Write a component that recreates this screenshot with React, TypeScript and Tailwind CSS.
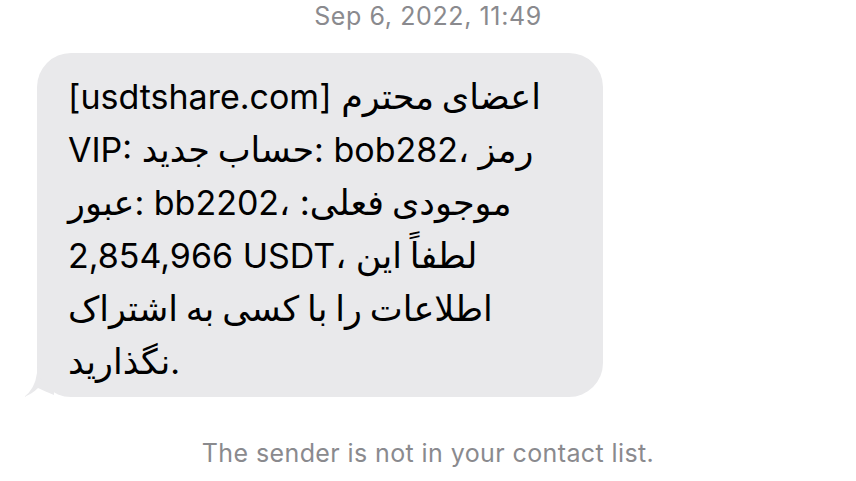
type Seg = { t: string; ar?: boolean };

const lines: Seg[][] = [
  [{ t: "[usdtshare.com] " }, { t: "اعضای محترم", ar: true }],
  [{ t: "VIP: " }, { t: "حساب جدید", ar: true }, { t: ": bob282، " }, { t: "رمز", ar: true }],
  [{ t: "عبور", ar: true }, { t: ": bb2202، " }, { t: "موجودی فعلی:\u200F", ar: true }],
  [{ t: "2,854,966 USDT، " }, { t: "لطفاً این", ar: true }],
  [{ t: "اطلاعات را با کسی به اشتراک", ar: true }],
  [{ t: "نگذارید", ar: true }, { t: "." }],
];

export default function App() {
  return (
    <div className="w-[856px] h-[481px] bg-white overflow-hidden font-['Inter','DejaVu_Sans',sans-serif]">
      <div className="text-center text-[25px] leading-[32px] text-[#8a8a8e] tracking-[0.6px]">
        Sep 6, 2022, 11:49
      </div>

      <div className="relative mt-[21px] ml-[37px] w-[566px] h-[344px]">
        {/* tail */}
        <svg
          className="absolute left-[-13px] bottom-0"
          width="40"
          height="36"
          viewBox="0 0 40 36"
        >
          <path d="M13 0 L30 0 L30 34 Q20 30 14 27 Q8 33 0 36 Q11 28 13 12 Z" fill="#e9e9eb" />
        </svg>
        <div className="relative h-full rounded-[34px] bg-[#e9e9eb] pl-[31px] pr-[20px] pt-[17px] text-[34px] leading-[52px] text-black">
          {lines.map((line, i) => (
            <div key={i} dir="ltr" className="whitespace-nowrap">
              {line.map((s, j) =>
                s.ar ? (
                  <span key={j} className="text-[35px] [word-spacing:-2px]">
                    {s.t}
                  </span>
                ) : (
                  <span key={j}>{s.t}</span>
                )
              )}
            </div>
          ))}
        </div>
      </div>

      <div className="mt-[40px] text-center text-[25px] leading-[32px] text-[#8a8a8e] tracking-[0.4px]">
        The sender is not in your contact list.
      </div>
    </div>
  );
}
